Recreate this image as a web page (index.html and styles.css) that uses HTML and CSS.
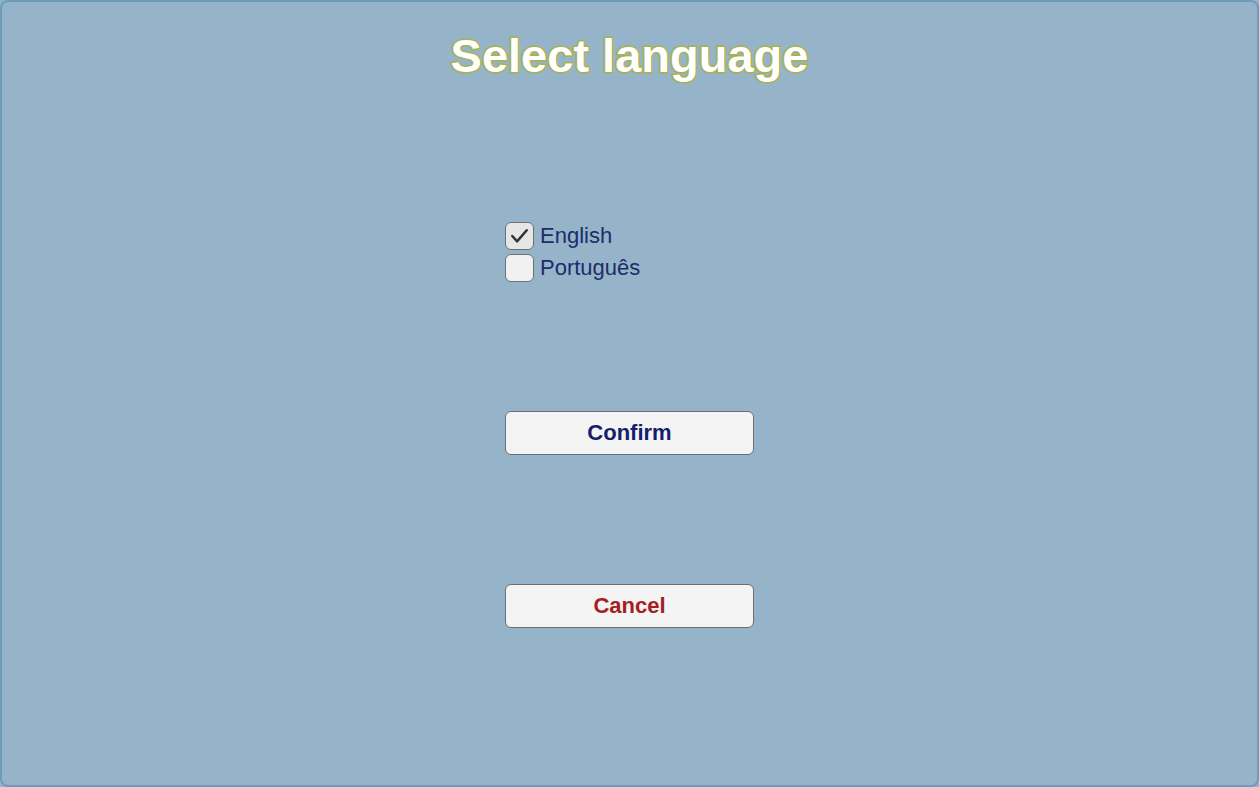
FILE: index.html
```html
<!DOCTYPE html>
<html lang="en">
<head>
<meta charset="utf-8">
<title>Select language</title>
<link rel="stylesheet" href="styles.css">
</head>
<body>
<div class="frame">
  <h1 class="title">Select language</h1>
  <div class="panel">
    <div class="options">
      <label class="option">
        <span class="box checked">
          <svg viewBox="0 0 28 28" width="28" height="28"><polyline points="6.5,14 11.5,19.5 21.5,8" fill="none" stroke="#333" stroke-width="2.6" stroke-linecap="round" stroke-linejoin="round"/></svg>
        </span>
        <span class="label">English</span>
      </label>
      <label class="option">
        <span class="box"></span>
        <span class="label">Português</span>
      </label>
    </div>
    <button class="btn confirm">Confirm</button>
    <button class="btn cancel">Cancel</button>
  </div>
</div>
</body>
</html>
```
FILE: styles.css
```css
html, body {
  margin: 0;
  padding: 0;
  height: 100%;
}
body {
  font-family: "Liberation Sans", Arial, sans-serif;
  background: #95b4c9;
}
.frame {
  box-sizing: border-box;
  height: 787px;
  width: 1259px;
  border: 2px solid #6f9bbb;
  border-radius: 8px;
  background: #95b4c9;
  display: flex;
  flex-direction: column;
  align-items: center;
  padding-top: 26px;
}
.title {
  margin: 0;
  font-size: 47px;
  line-height: 56px;
  font-weight: bold;
  color: #ffffff;
  -webkit-text-stroke: 3px #a9b14c;
  paint-order: stroke fill;
}
.panel {
  width: 249px;
  display: flex;
  flex-direction: column;
  margin-top: 138px;
}
.options {
  display: flex;
  flex-direction: column;
  gap: 4px;
}
.option {
  display: flex;
  align-items: center;
  gap: 6px;
  height: 28px;
}
.box {
  box-sizing: border-box;
  width: 29px;
  height: 28px;
  border: 1px solid #707070;
  border-radius: 6px;
  background: #f1f1f1;
  display: flex;
  align-items: center;
  justify-content: center;
}
.box.checked {
  background: #e6e6e6;
}
.box svg {
  display: block;
}
.label {
  font-size: 22px;
  color: #1c2d6b;
  line-height: 28px;
}
.btn {
  box-sizing: border-box;
  width: 249px;
  height: 44px;
  border: 1px solid #6e6e6e;
  border-radius: 6px;
  background: #f4f4f4;
  font-family: "Liberation Sans", Arial, sans-serif;
  font-size: 22px;
  font-weight: bold;
  padding: 0;
  cursor: pointer;
}
.confirm {
  margin-top: 129px;
  color: #13216a;
}
.cancel {
  margin-top: 129px;
  color: #a61e22;
}
```
